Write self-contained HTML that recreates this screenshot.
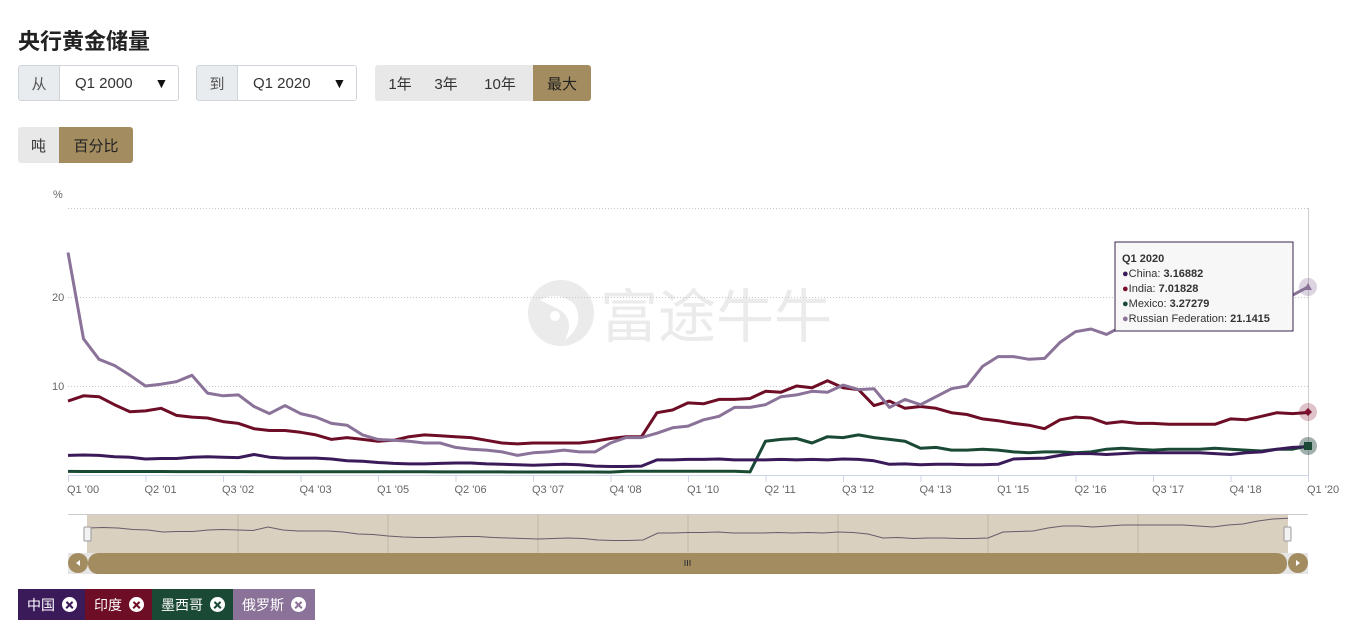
<!DOCTYPE html>
<html><head><meta charset="utf-8">
<style>
body{margin:0;background:#fff;font-family:"Liberation Sans","Noto Sans CJK SC",sans-serif;width:1372px;height:636px;overflow:hidden;position:relative;color:#333}
.a{position:absolute}
h1{position:absolute;left:18px;top:24px;margin:0;font-size:22px;font-weight:bold;color:#222;font-family:"Liberation Sans","Noto Sans CJK SC",sans-serif}
.grp{position:absolute;height:36px;display:flex;font-size:15px;border-radius:3px;overflow:hidden}
.lab{background:#e9ecef;border:1px solid #ced4da;color:#555;display:flex;align-items:center;justify-content:center;box-sizing:border-box}
.sel{background:#fff;border:1px solid #ced4da;border-left:none;display:flex;align-items:center;box-sizing:border-box;color:#333}
.btn{background:#e8e8e8;display:flex;align-items:center;justify-content:center;color:#333}
.on{background:#a38c5f;color:#222}
.tag{position:absolute;top:589px;height:31px;display:flex;align-items:center;color:#fff;font-size:14px;padding-left:9px;box-sizing:border-box}
.x{display:inline-block;width:15px;height:15px;border-radius:50%;background:#fff;margin-left:7px;position:relative}
.x:before,.x:after{content:"";position:absolute;left:3px;top:6.5px;width:9px;height:2.4px;background:var(--c);transform:rotate(45deg)}
.x:after{transform:rotate(-45deg)}
</style></head><body>
<h1>央行黄金储量</h1>
<div class="grp" style="left:18px;top:65px;width:161px"><div class="lab" style="width:42px;border-radius:3px 0 0 3px">从</div><div class="sel" style="width:119px;padding-left:15px;border-radius:0 3px 3px 0">Q1 2000<span style="margin-left:22px;font-size:14px;color:#111">▼</span></div></div>
<div class="grp" style="left:196px;top:65px;width:161px"><div class="lab" style="width:42px;border-radius:3px 0 0 3px">到</div><div class="sel" style="width:119px;padding-left:15px;border-radius:0 3px 3px 0">Q1 2020<span style="margin-left:22px;font-size:14px;color:#111">▼</span></div></div>
<div class="grp" style="left:375px;top:65px;width:216px"><div class="btn" style="width:50px">1年</div><div class="btn" style="width:42px">3年</div><div class="btn" style="width:66px">10年</div><div class="btn on" style="width:58px">最大</div></div>
<div class="grp" style="left:18px;top:127px;width:115px"><div class="btn" style="width:41px">吨</div><div class="btn on" style="width:74px">百分比</div></div>

<svg class="a" style="left:0;top:0" width="1372" height="636" id="s">
<g fill="#ebebeb" font-family="Liberation Sans, Noto Sans CJK SC, sans-serif">
<circle cx="561" cy="313" r="33"/>
<circle cx="555" cy="316" r="5" fill="#fff"/>
<path d="M540 300 Q560 290 575 305 Q585 325 565 340 Q575 320 560 310Z" fill="#fff"/>
<text x="600" y="337" font-size="58" fill="#ebebeb">富途牛牛</text>
</g>
<g stroke="#c8c8c8" stroke-dasharray="1,2" stroke-width="1">
<line x1="68" x2="1308" y1="208.5" y2="208.5"/><line x1="68" x2="1308" y1="297.5" y2="297.5"/><line x1="68" x2="1308" y1="386.5" y2="386.5"/>
</g>
<line x1="1308.5" x2="1308.5" y1="208" y2="480" stroke="#ccc"/>
<line x1="68" x2="1308" y1="475.5" y2="475.5" stroke="#ccd6eb"/>
<g font-size="11" fill="#666"><text x="53" y="198">%</text><text x="52" y="301">20</text><text x="52" y="390">10</text></g>
<g id="xl" font-size="11" fill="#666"></g>
<g id="lines" fill="none" stroke-width="3" stroke-linejoin="round"></g>
<rect x="87" y="514" width="1201" height="39" fill="#d9d0c0"/>
<line x1="68" x2="1308" y1="514.5" y2="514.5" stroke="#ccc"/>
<g id="navg" stroke="#c4b8a4"></g>
<polyline id="nav" fill="none" stroke="#6b5a6a" stroke-width="1"/>
<rect x="84" y="527" width="7" height="14" fill="#f2f2f2" stroke="#999" rx="1"/>
<rect x="1284" y="527" width="7" height="14" fill="#f2f2f2" stroke="#999" rx="1"/>
<rect x="68" y="553" width="1240" height="21" fill="#e6e6e6"/>
<rect x="88" y="553" width="1199" height="21" rx="10" fill="#a38c5f"/>
<circle cx="78" cy="563" r="10" fill="#a38c5f"/><path d="M80 560 L76 563 L80 566Z" fill="#fff"/>
<circle cx="1298" cy="563" r="10" fill="#a38c5f"/><path d="M1296 560 L1300 563 L1296 566Z" fill="#fff"/>
<g stroke="#333"><line x1="685" x2="685" y1="560" y2="566"/><line x1="687.5" x2="687.5" y1="560" y2="566"/><line x1="690" x2="690" y1="560" y2="566"/></g>
<circle cx="1308" cy="287" r="9" fill="#8a7298" opacity=".3"/><path d="M1308 283 L1312 290 L1304 290Z" fill="#8a7298"/>
<circle cx="1308" cy="412" r="9" fill="#7a0f2e" opacity=".25"/><path d="M1308 408 L1312 412 L1308 416 L1304 412Z" fill="#7a0f2e"/>
<circle cx="1308" cy="446" r="9" fill="#1a3d34" opacity=".4"/><rect x="1304" y="442" width="8" height="8" fill="#1a4a35"/>
<rect x="1115" y="242" width="178" height="89" fill="#f7f7f7" stroke="#3b2352"/>
<g font-size="11" fill="#333">
<text x="1122" y="262" font-weight="bold">Q1 2020</text>
<text x="1122" y="277"><tspan fill="#3b1a5a">●</tspan>China: <tspan font-weight="bold">3.16882</tspan></text>
<text x="1122" y="292"><tspan fill="#7a0f2e">●</tspan>India: <tspan font-weight="bold">7.01828</tspan></text>
<text x="1122" y="307"><tspan fill="#1a4a35">●</tspan>Mexico: <tspan font-weight="bold">3.27279</tspan></text>
<text x="1122" y="322"><tspan fill="#8a7298">●</tspan>Russian Federation: <tspan font-weight="bold">21.1415</tspan></text>
</g>
</svg>
<div class="tag" style="left:18px;width:67px;background:#3b1a5a;--c:#3b1a5a">中国<span class="x"></span></div>
<div class="tag" style="left:85px;width:67px;background:#6e0d26;--c:#6e0d26">印度<span class="x"></span></div>
<div class="tag" style="left:152px;width:81px;background:#1a4a35;--c:#1a4a35">墨西哥<span class="x"></span></div>
<div class="tag" style="left:233px;width:82px;background:#8a7298;--c:#8a7298">俄罗斯<span class="x"></span></div>
<script>
function fix(a,last){a=a.slice(0,81);while(a.length<81)a.push(last);a[80]=last;return a;}
var R=fix([25,15.3,13,12.3,11.2,10,10.2,10.5,11.2,9.2,8.9,9.0,7.7,6.9,7.8,6.9,6.5,5.8,5.6,4.5,4.0,3.9,3.8,3.6,3.6,3.1,2.9,2.8,2.6,2.2,2.5,2.6,2.8,2.6,2.6,3.6,4.2,4.2,4.7,5.3,5.5,6.2,6.6,7.6,7.6,7.9,8.8,9.0,9.4,9.3,10.1,9.6,9.7,7.6,8.5,7.9,8.8,9.7,10.0,12.2,13.3,13.3,13.0,13.1,14.9,16.1,16.4,15.8,16.7,16.6,17.0,17.3,17.8,17.6,17.0,18.1,18.6,19.6,20.3,20.2,21.1],21.14);
var I=fix([8.3,8.9,8.8,7.9,7.1,7.2,7.5,6.7,6.5,6.4,6.0,5.8,5.2,5.0,5.0,4.8,4.5,4.0,4.2,4.0,3.8,3.9,4.3,4.5,4.4,4.3,4.2,3.9,3.6,3.5,3.6,3.6,3.6,3.6,3.8,4.1,4.3,4.3,7.0,7.3,8.1,8.0,8.5,8.5,8.6,9.4,9.3,10.0,9.8,10.6,9.8,9.6,7.8,8.3,7.5,7.7,7.5,7.0,6.8,6.3,6.1,5.8,5.6,5.2,6.2,6.5,6.4,5.8,6.0,5.8,5.8,5.7,5.7,5.7,5.7,6.3,6.2,6.6,7.0,6.9,7.0],7.02);
var C=fix([2.2,2.25,2.2,2.05,2.0,1.8,1.85,1.85,2.0,2.05,2.0,1.95,2.3,2.0,1.9,1.9,1.9,1.8,1.6,1.55,1.4,1.3,1.25,1.25,1.3,1.35,1.35,1.25,1.2,1.15,1.1,1.15,1.2,1.15,1.0,0.95,0.95,1.0,1.7,1.7,1.75,1.75,1.8,1.7,1.7,1.7,1.75,1.7,1.75,1.7,1.8,1.75,1.6,1.2,1.25,1.15,1.2,1.2,1.15,1.15,1.2,1.8,1.85,1.9,2.2,2.4,2.4,2.3,2.4,2.5,2.5,2.5,2.5,2.5,2.4,2.3,2.5,2.6,2.9,3.1,3.17],3.17);
var M=[];var mm=[0.35,3.8,4.0,4.1,3.6,4.3,4.2,4.5,4.2,4.0,3.8,3.0,3.1,2.8,2.8,2.9,2.8,2.6,2.5,2.6,2.6,2.5,2.6,2.9,3.0,2.9,2.8,2.9,2.9,2.9,3.0,2.9,2.8,2.7,2.9,2.9,3.0,3.2,3.27];
for(var i=0;i<81;i++){var v;if(i<44)v=0.4-i*0.002+(i>35?0.1:0);else v=mm[i-44]!==undefined?mm[i-44]:3.27;M.push(v);}
M[80]=3.27;
function pts(a,x0,dx,y0,sc){return a.map(function(v,i){return (x0+i*dx).toFixed(1)+","+(y0-v*sc).toFixed(1)}).join(" ")}
var dx=1240/80,g=document.getElementById("lines");
[[M,"#1a4a35"],[C,"#3b1a5a"],[I,"#6e0d26"],[R,"#8a7298"]].forEach(function(s){var p=document.createElementNS("http://www.w3.org/2000/svg","polyline");p.setAttribute("points",pts(s[0],68,dx,475,8.9));p.setAttribute("stroke",s[1]);g.appendChild(p);});
var nv=C.map(function(v,i){return (88+i*1200/80).toFixed(1)+","+(550-v*10).toFixed(1)}).join(" ");
document.getElementById("nav").setAttribute("points",nv);
var xl=document.getElementById("xl"),labs=["Q1 '00","Q2 '01","Q3 '02","Q4 '03","Q1 '05","Q2 '06","Q3 '07","Q4 '08","Q1 '10","Q2 '11","Q3 '12","Q4 '13","Q1 '15","Q2 '16","Q3 '17","Q4 '18","Q1 '20"];
var ng=document.getElementById("navg");
labs.forEach(function(t,k){var x=68+k*5*dx;var tx=document.createElementNS("http://www.w3.org/2000/svg","text");tx.setAttribute("x",x-1);tx.setAttribute("y",493);tx.textContent=t;xl.appendChild(tx);
var l=document.createElementNS("http://www.w3.org/2000/svg","line");l.setAttribute("x1",x+.5);l.setAttribute("x2",x+.5);l.setAttribute("y1",475);l.setAttribute("y2",482);l.setAttribute("stroke","#ccd6eb");xl.appendChild(l);});
for(var k=1;k<8;k++){var x=88+k*150;var l=document.createElementNS("http://www.w3.org/2000/svg","line");l.setAttribute("x1",x);l.setAttribute("x2",x);l.setAttribute("y1",514);l.setAttribute("y2",553);ng.appendChild(l);}
</script>
</body></html>
